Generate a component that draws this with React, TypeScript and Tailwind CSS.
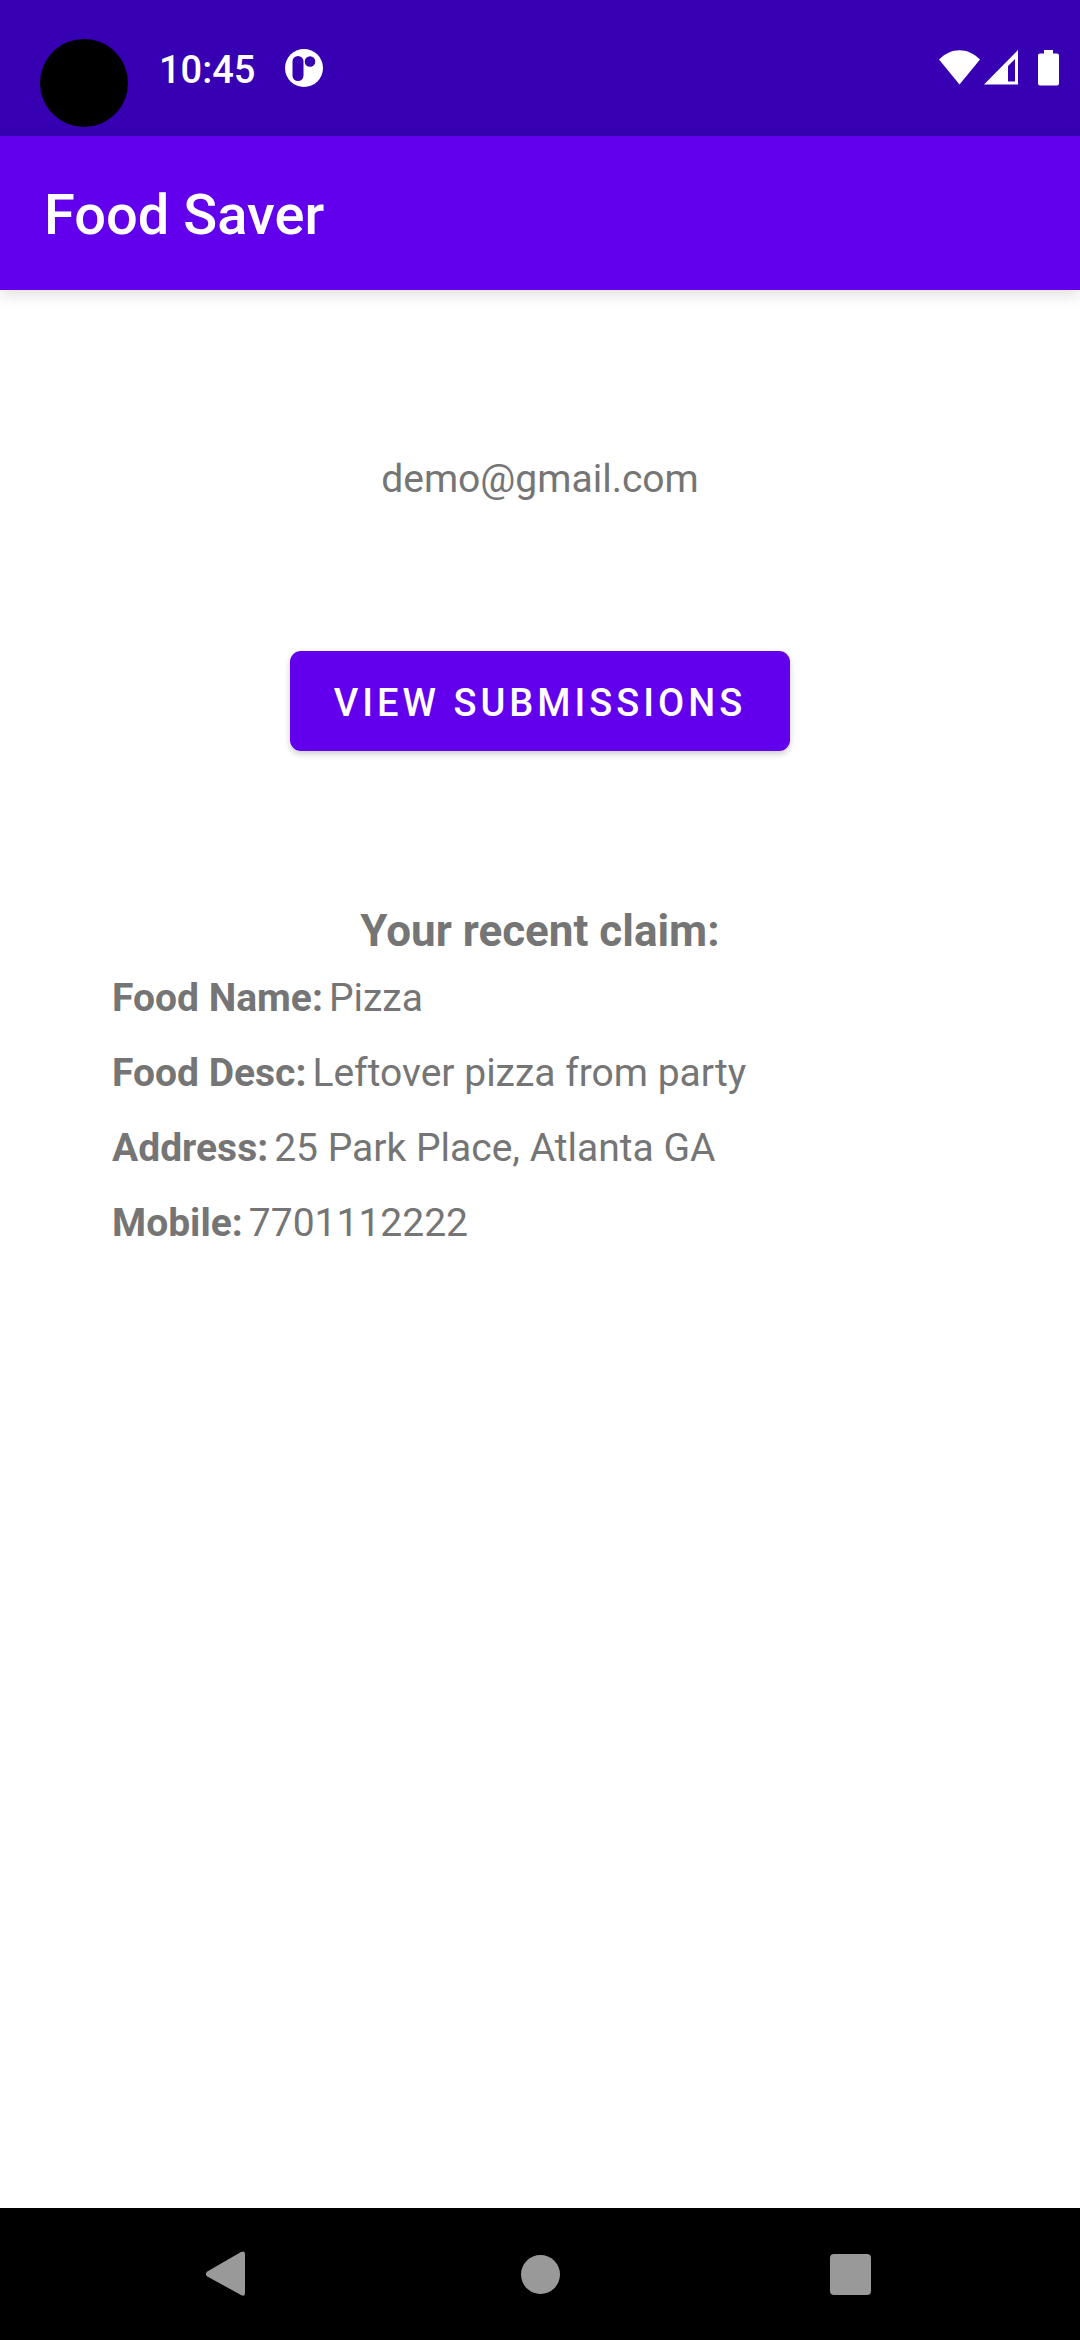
const claim = [
  { label: "Food Name:", value: "Pizza" },
  { label: "Food Desc:", value: "Leftover pizza from party" },
  { label: "Address:", value: "25 Park Place, Atlanta GA" },
  { label: "Mobile:", value: "7701112222" },
];

function StatusBar() {
  return (
    <div className="flex h-[136px] shrink-0 items-start bg-[#3700b3] pr-[21px] pl-10 text-white">
      <div className="mt-[39px] size-[88px] rounded-full bg-black" />
      <span className="mt-[47px] ml-[31px] text-[38px] leading-[46px] font-medium">10:45</span>
      <svg className="mt-[49px] ml-[30px] h-[38px] w-[38px]" viewBox="0 0 38 38" aria-hidden="true">
        <circle cx="19" cy="19" r="19" fill="#fff" />
        <rect x="7.5" y="7" width="11" height="25" rx="5.5" fill="#3700b3" />
        <circle cx="25" cy="12.5" r="5.3" fill="#3700b3" />
      </svg>
      <div className="mt-[50px] ml-auto flex items-start">
        <svg className="h-[35px] w-[41px]" viewBox="0 0 41 35" fill="#fff" aria-hidden="true">
          <path d="M0 9.5C6 3.5 13 .2 20.500 .2S35 3.500 41 9.500L20.500 34.500Z" />
        </svg>
        <svg className="ml-[4px] h-[35px] w-[34px]" viewBox="0 0 34 35" fill="#fff" aria-hidden="true">
          <path fillRule="evenodd" d="M34 0V34.500H0ZM31 9L24 16V31.500H31Z" />
        </svg>
        <svg className="ml-[20px] h-[36px] w-[21px]" viewBox="0 0 21 36" fill="#fff" aria-hidden="true">
          <path d="M6 0H15V3.500H19A2 2 0 0 1 21 5.500V33.500A2 2 0 0 1 19 35.500H2A2 2 0 0 1 0 33.500V5.500A2 2 0 0 1 2 3.500H6Z" />
        </svg>
      </div>
    </div>
  );
}

function NavigationBar() {
  return (
    <nav className="flex h-[132px] shrink-0 items-center justify-center gap-[262px] bg-black text-[#999999]">
      <button type="button" aria-label="Back" className="flex size-12 items-center justify-start">
        <svg className="h-[46px] w-10 shrink-0" viewBox="0 0 40 46" fill="currentColor" aria-hidden="true">
          <path d="M1.300 20.500L35 1Q39 -.8 39 3V42Q39 46 35 44L1.300 25.500Q-1.500 23 1.300 20.500Z" />
        </svg>
      </button>
      <button type="button" aria-label="Home" className="flex size-12 items-center justify-center">
        <span className="size-[39px] rounded-full bg-current" />
      </button>
      <button type="button" aria-label="Recent apps" className="flex size-12 items-center justify-center">
        <span className="size-[41px] rounded-[4px] bg-current" />
      </button>
    </nav>
  );
}

export default function App() {
  return (
    <div className="flex min-h-screen flex-col bg-white font-[Roboto,sans-serif] text-[39px] leading-[51px] text-[#757575]">
      <StatusBar />
      <header className="flex h-[154px] shrink-0 items-center bg-[#6200ee] px-11 pt-1 text-white shadow-[0_4px_16px_rgba(0,0,0,0.14)]">
        <h1 className="text-[56px] leading-[64px] font-medium">Food Saver</h1>
      </header>
      <main className="flex grow flex-col items-center px-28 pt-[164px]">
        <p>demo@gmail.com</p>
        <button
          type="button"
          className="mt-[146px] h-[100px] rounded-[11px] bg-[#6200ee] px-11 pt-1 text-[38px] font-medium tracking-[4px] text-white shadow-[0_3px_6px_rgba(0,0,0,0.2)]"
        >
          VIEW SUBMISSIONS
        </button>
        <h2 className="mt-[150px] text-[44px] leading-[60px] font-bold">Your recent claim:</h2>
        <dl className="mt-3 flex flex-col gap-6 self-stretch">
          {claim.map(({ label, value }) => (
            <div key={label} className="flex gap-[6px]">
              <dt className="font-bold">{label}</dt>
              <dd>{value}</dd>
            </div>
          ))}
        </dl>
      </main>
      <NavigationBar />
    </div>
  );
}
